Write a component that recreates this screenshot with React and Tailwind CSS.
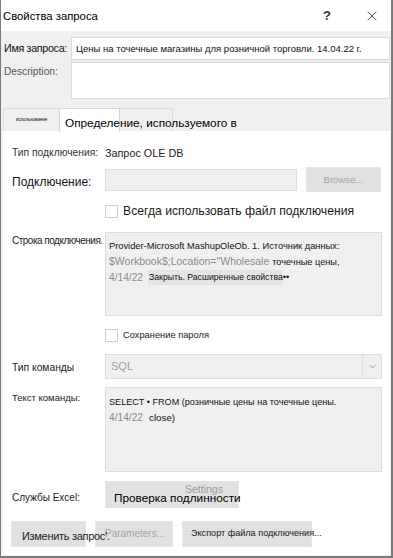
import { X } from 'lucide-react';

const font = { fontFamily: '"Liberation Sans", "Noto Sans", sans-serif' };

function Checkbox({ label, className = '' }) {
  return (
    <div className={`flex items-center ${className}`}>
      <div className="w-[13px] h-[13px] border border-[#cfcfcf] bg-white shrink-0" />
      <span className="ml-[5px] text-[#1a1a1a]">{label}</span>
    </div>
  );
}

function Btn({ children, className = '', disabled }) {
  return (
    <div
      className={`flex items-center shrink-0 bg-[#e1e1e1] border border-[#e6e6e6] ${
        disabled ? 'text-[#a3a3a3]' : 'text-[#1a1a1a]'
      } ${className}`}
    >
      {children}
    </div>
  );
}

export default function App() {
  return (
    <div
      className="w-[393px] h-[558px] flex flex-col bg-[#f0f0f0] border-l border-r-2 border-b-2 border-[#7a7a7a] overflow-hidden text-[11px] leading-none whitespace-nowrap"
      style={font}
    >
      {/* title bar */}
      <div className="h-[31px] bg-white flex items-center shrink-0">
        <span className="ml-[2px] mt-[2px] text-[11.3px] text-black">Свойства запроса</span>
        <span className="ml-auto mr-[33px] text-[13px] font-bold text-[#333]">?</span>
        <X className="mr-[11px] w-[16px] h-[16px] text-[#222]" strokeWidth={1.2} />
      </div>

      {/* name + description */}
      <div className="flex items-center mt-[6px] h-[23px]">
        <span className="w-[70px] shrink-0 pl-[3px] text-[10.7px] text-[#111] tracking-[-0.3px]">Имя запроса:</span>
        <div className="flex-1 mr-[1px] h-full bg-white border border-[#dadada] flex items-center pl-[4px] text-[9.5px] text-[#111] overflow-hidden">
          Цены на точечные магазины для розничной торговли. 14.04.22 г.
        </div>
      </div>
      <div className="flex mt-[2px] h-[37px]">
        <span className="w-[70px] shrink-0 pl-[3px] pt-[5px] text-[10.2px] text-[#555]">Description:</span>
        <div className="flex-1 mr-[1px] h-full bg-white border border-[#dadada]" />
      </div>

      {/* tabs */}
      <div className="flex mt-[9px] h-[23px] pl-[2px] relative">
        <div className="w-[56px] h-full border-t border-l border-[#dcdcdc] flex items-center justify-center pt-[1px]">
          <span className="text-[4.5px] text-black">использование</span>
        </div>
        <div className="w-[61px] h-[24px] bg-white border border-b-0 border-[#d6d6d6] z-10" />
        <div className="w-[53px] h-full border-t border-r border-[#dcdcdc]" />
        <span className="absolute left-[64px] top-[10px] z-20 text-[11.8px] text-black">
          Определение, используемого в
        </span>
      </div>

      {/* panel */}
      <div className="flex-1 bg-white ml-[2px] mr-[1px] mb-[1px] pl-[9px] flex flex-col">
        <div className="flex items-center mt-[16px] h-[12px]">
          <span className="w-[93px] shrink-0 text-[10.3px] text-[#333]">Тип подключения:</span>
          <span className="text-[10.8px] text-[#222]">Запрос OLE DB</span>
        </div>

        <div className="flex items-center mt-[8px] h-[25px]">
          <span className="w-[93px] shrink-0 text-[12px] text-[#111] pt-[5px]">Подключение:</span>
          <div className="w-[192px] shrink-0 h-[22px] bg-[#f0f0f0] border border-[#dedede]" />
          <Btn disabled className="ml-[9px] w-[75px] h-[25px] justify-center text-[9.6px]">
            Browse...
          </Btn>
        </div>

        <Checkbox
          className="mt-[13px] ml-[93px] h-[13px] text-[12.2px]"
          label="Всегда использовать файл подключения"
        />

        <div className="flex mt-[14px] h-[84px]">
          <span className="w-[93px] shrink-0 pt-[4px] text-[10px] text-[#222] tracking-[-0.5px]">
            Строка подключения.
          </span>
          <div className="w-[277px] shrink-0 h-full bg-[#f0f0f0] border border-[#dedede] pl-[3px] pt-[6px] text-[9.3px] text-[#111] leading-[15px]">
            <div>Provider-Microsoft MashupOleOb. 1. Источник данных:</div>
            <div>
              <span className="text-[10.5px] text-[#8a8a8a]">$Workbook$;Location="Wholesale</span>
              <span className="ml-[3px] text-[9.2px]">точечные цены,</span>
            </div>
            <div className="flex items-center">
              <span className="text-[10.2px] text-[#8a8a8a]">4/14/22</span>
              <span className="ml-[5px] bg-[#e4e4e4] pl-[1px] text-[8.7px]">Закрыть. Расширенные свойства</span>
              <span>••</span>
            </div>
          </div>
        </div>

        <Checkbox
          className="mt-[13px] ml-[93px] h-[13px] text-[9.3px]"
          label="Сохранение пароля"
        />

        <div className="flex items-center mt-[12px] h-[25px]">
          <span className="w-[93px] shrink-0 text-[10.3px] text-[#222] pt-[4px]">Тип команды</span>
          <div className="w-[277px] shrink-0 h-full bg-[#f0f0f0] border border-[#dedede] flex items-center">
            <span className="pl-[5px] text-[11px] text-[#a0a0a0] flex-1">SQL</span>
            <div className="w-[19px] h-full border-l border-[#dedede] flex items-center justify-center">
              <svg width="7" height="5" viewBox="0 0 7 5">
                <path d="M0.5 1 L3.5 4 L6.5 1" fill="none" stroke="#9a9a9a" strokeWidth="1" />
              </svg>
            </div>
          </div>
        </div>

        <div className="flex mt-[8px] h-[85px]">
          <span className="w-[93px] shrink-0 pt-[6px] text-[9.5px] text-[#222]">Текст команды:</span>
          <div className="w-[277px] shrink-0 h-full bg-[#f0f0f0] border border-[#dedede] pl-[3px] pt-[7px] text-[9.1px] text-[#111] leading-[15px]">
            <div>SELECT • FROM (розничные цены на точечные цены.</div>
            <div>
              <span className="text-[10.2px] text-[#8a8a8a]">4/14/22</span>
              <span className="ml-[6px] text-[9.8px]">close)</span>
            </div>
          </div>
        </div>

        <div className="flex items-center mt-[9px] h-[27px]">
          <span className="w-[93px] shrink-0 text-[10px] text-[#222] pt-[7px]">Службы Excel:</span>
          <Btn className="relative w-[134px] h-[27px]">
            <span className="absolute left-[79px] top-[2px] text-[10.5px] text-[#9a9a9a]">Settings</span>
            <span className="relative ml-[8px] mt-[8px] text-[11.8px] text-black">
              Проверка подлинности
            </span>
          </Btn>
        </div>

        <div className="flex items-center mt-[13px] h-[26px] -ml-[1px]">
          <Btn className="w-[75px] h-[26px] pl-[10px] pt-[4px] text-[11px] tracking-[-0.3px]">
            <span className="relative z-10">Изменить запрос'.</span>
          </Btn>
          <Btn disabled className="ml-[9px] w-[78px] h-[26px] pl-[9px] text-[10px]">
            Parameters...
          </Btn>
          <Btn className="ml-[9px] w-[130px] h-[26px] pl-[8px] text-[9.1px]">
            Экспорт файла подключения...
          </Btn>
        </div>
      </div>
    </div>
  );
}
